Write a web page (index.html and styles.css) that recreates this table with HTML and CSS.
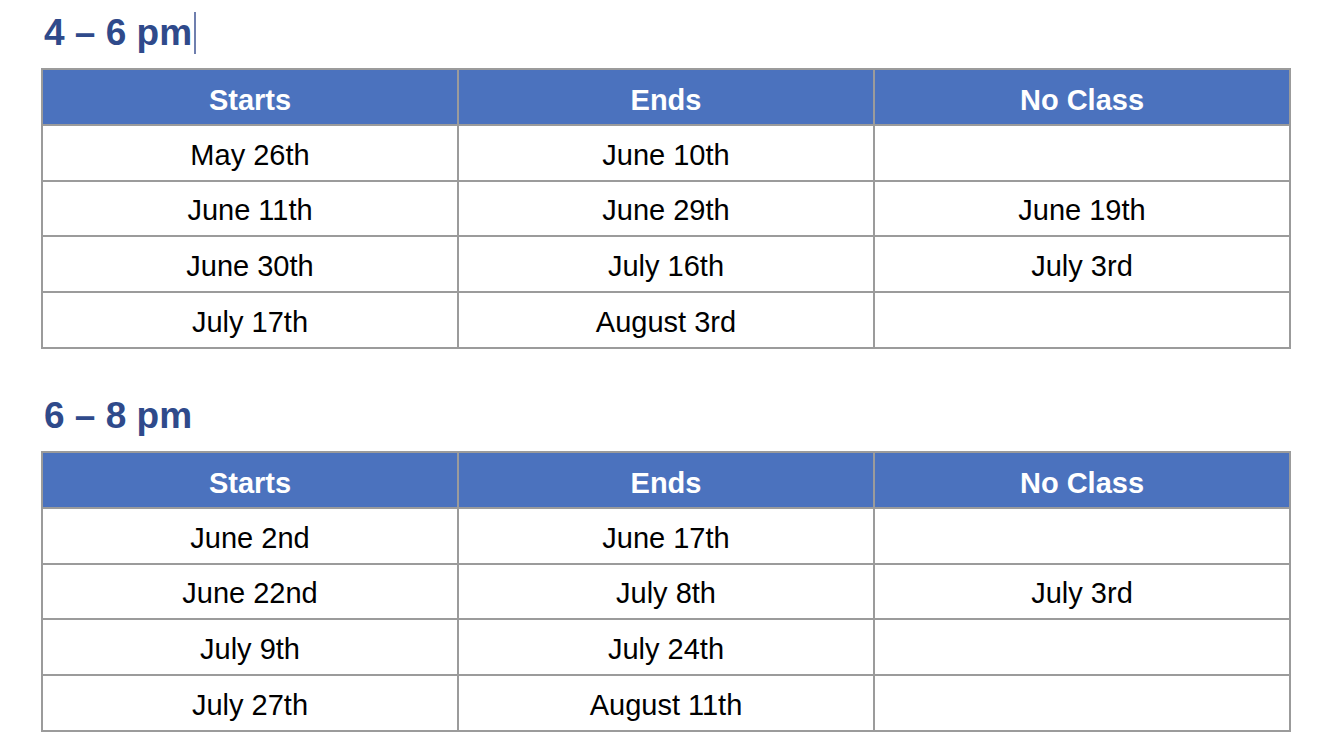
FILE: index.html
```html
<!DOCTYPE html>
<html lang="en">
<head>
<meta charset="utf-8">
<title>Class Schedule</title>
<link rel="stylesheet" href="styles.css">
</head>
<body>
<main class="page">
  <section class="block">
    <h2 class="slot-title">4 – 6 pm<span class="caret"></span></h2>
    <table class="schedule">
      <thead>
        <tr><th>Starts</th><th>Ends</th><th>No Class</th></tr>
      </thead>
      <tbody>
        <tr><td>May 26th</td><td>June 10th</td><td></td></tr>
        <tr><td>June 11th</td><td>June 29th</td><td>June 19th</td></tr>
        <tr><td>June 30th</td><td>July 16th</td><td>July 3rd</td></tr>
        <tr><td>July 17th</td><td>August 3rd</td><td></td></tr>
      </tbody>
    </table>
  </section>
  <section class="block block-second">
    <h2 class="slot-title">6 – 8 pm</h2>
    <table class="schedule">
      <thead>
        <tr><th>Starts</th><th>Ends</th><th>No Class</th></tr>
      </thead>
      <tbody>
        <tr><td>June 2nd</td><td>June 17th</td><td></td></tr>
        <tr><td>June 22nd</td><td>July 8th</td><td>July 3rd</td></tr>
        <tr><td>July 9th</td><td>July 24th</td><td></td></tr>
        <tr><td>July 27th</td><td>August 11th</td><td></td></tr>
      </tbody>
    </table>
  </section>
</main>
</body>
</html>
```
FILE: styles.css
```css
html, body {
  margin: 0;
  padding: 0;
  background: #ffffff;
}

body {
  font-family: "Liberation Sans", Arial, sans-serif;
  color: #000000;
}

.page {
  padding: 11px 0 0 41px;
}

.block-second {
  margin-top: 45px;
}

.slot-title {
  margin: 0;
  padding-left: 3px;
  font-size: 37px;
  line-height: 44px;
  font-weight: 700;
  color: #2f4a8b;
  height: 44px;
}

.caret {
  display: inline-block;
  width: 2px;
  height: 42px;
  margin-left: 2px;
  background: #6f7fae;
  vertical-align: -9px;
}

.schedule {
  margin-top: 13px;
  border-collapse: collapse;
  table-layout: fixed;
  width: 1250px;
}

.schedule th,
.schedule td {
  border: 2px solid #9b9b9b;
  width: 414px;
  height: 55.8px;
  padding: 5px 0 0 0;
  box-sizing: border-box;
  text-align: center;
  vertical-align: middle;
  font-size: 29px;
  line-height: 33px;
}

.schedule th {
  background: #4b72be;
  color: #ffffff;
  font-weight: 700;
  padding-top: 7px;
}

.schedule td {
  font-weight: 400;
  color: #000000;
}
```
